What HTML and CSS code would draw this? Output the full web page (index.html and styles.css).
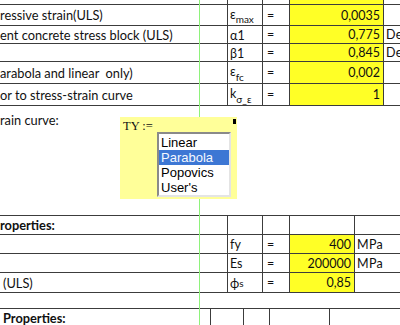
FILE: index.html
```html
<!DOCTYPE html>
<html>
<head>
<meta charset="utf-8">
<link rel="stylesheet" href="styles.css">
</head>
<body>
<div class="sheet">
  <div class="pagebreak"></div>

  <div class="row top r0">
    <div class="c lab"></div><div class="c sym"></div><div class="c eq"></div><div class="c val"></div><div class="c unit"></div>
  </div>
  <div class="row top r1">
    <div class="c lab">ressive strain(ULS)</div>
    <div class="c sym"><span class="sym-main">ε</span><sub>max</sub></div>
    <div class="c eq">=</div>
    <div class="c val">0,0035</div>
    <div class="c unit"></div>
  </div>
  <div class="row top r2">
    <div class="c lab">ent concrete stress block (ULS)</div>
    <div class="c sym">α1</div>
    <div class="c eq">=</div>
    <div class="c val">0,775</div>
    <div class="c unit">De</div>
  </div>
  <div class="row top r2">
    <div class="c lab"></div>
    <div class="c sym">β1</div>
    <div class="c eq">=</div>
    <div class="c val">0,845</div>
    <div class="c unit">De</div>
  </div>
  <div class="row top r4">
    <div class="c lab">arabola and linear&nbsp; only)</div>
    <div class="c sym"><span class="sym-main">ε</span><sub>fc</sub></div>
    <div class="c eq">=</div>
    <div class="c val">0,002</div>
    <div class="c unit"></div>
  </div>
  <div class="row top r4">
    <div class="c lab">or to stress-strain curve</div>
    <div class="c sym"><span class="sym-main">k</span><sub>σ_ε</sub></div>
    <div class="c eq">=</div>
    <div class="c val">1</div>
    <div class="c unit"></div>
  </div>

  <div class="chart">
    <div class="chart-label">rain curve:</div>
    <div class="region">
      <span class="marker"></span>
      <div class="ty">TY :=</div>
      <div class="listbox">
        <div class="item">Linear</div>
        <div class="item sel">Parabola</div>
        <div class="item">Popovics</div>
        <div class="item">User's</div>
      </div>
    </div>
  </div>

  <div class="row low h19">
    <div class="c lab bold">roperties:</div><div class="c sym"></div><div class="c eq"></div><div class="c val plain"></div><div class="c unit"></div>
  </div>
  <div class="row low h19">
    <div class="c lab"></div>
    <div class="c sym">fy</div>
    <div class="c eq">=</div>
    <div class="c val">400</div>
    <div class="c unit">MPa</div>
  </div>
  <div class="row low h19">
    <div class="c lab"></div>
    <div class="c sym">Es</div>
    <div class="c eq">=</div>
    <div class="c val">200000</div>
    <div class="c unit">MPa</div>
  </div>
  <div class="row low h20">
    <div class="c lab ind">(ULS)</div>
    <div class="c sym"><span class="sym-main">ϕ</span><sub class="s-small">s</sub></div>
    <div class="c eq">=</div>
    <div class="c val">0,85</div>
    <div class="c unit"></div>
  </div>
  <div class="row blank h16"></div>
  <div class="row last">
    <div class="c lab bold ind">Properties:</div><div class="c"></div><div class="c"></div><div class="c"></div><div class="c"></div>
  </div>
</div>
</body>
</html>
```

FILE: styles.css
```css
html, body {
  margin: 0;
  padding: 0;
  background: #ffffff;
}
body {
  width: 400px;
  height: 325px;
  overflow: hidden;
  font-family: "Lato", "Liberation Sans", sans-serif;
  font-size: 12.5px;
  color: #111;
}
.sheet {
  position: relative;
  width: 400px;
  height: 325px;
  overflow: hidden;
}
.pagebreak {
  position: absolute;
  left: 199px;
  top: 0;
  width: 1px;
  height: 325px;
  background: #8ef27a;
  z-index: 1;
}
.row {
  display: grid;
  box-sizing: border-box;
  border-bottom: 1px solid #3c3c3c;
  white-space: nowrap;
}
.row.top {
  grid-template-columns: 227px 35px 27px 94px 1fr;
}
.row.low {
  grid-template-columns: 227px 35px 27px 65px 1fr;
}
.row.last {
  grid-template-columns: 210px 33px 26px 60px 1fr;
  height: 16px;
  border-bottom: none;
}
.row.last .lab {
  align-items: flex-start;
  line-height: 14px;
  padding-top: 2px;
}
.r0 { height: 5px; }
.r1 { height: 21px; }
.r2 { height: 18px; }
.r4 { height: 22px; }
.h19 { height: 19px; }
.h20 { height: 20px; }
.h16 { height: 16px; }
.c {
  display: flex;
  align-items: center;
  overflow: hidden;
  padding: 0 2px;
  box-sizing: border-box;
}
.c + .c {
  border-left: 1px solid #3c3c3c;
}
.lab {
  padding: 0;
  font-size: 12.8px;
}
.lab.ind {
  padding-left: 3px;
}
.bold {
  font-weight: bold;
}
.val {
  background: #ffff26;
  justify-content: flex-end;
  padding-right: 3px;
}
.val.plain {
  background: transparent;
}
.eq {
  padding-left: 4px;
}
.unit {
  padding-left: 2px;
  letter-spacing: 0.3px;
}
.sym-main {
  align-self: flex-start;
  margin-top: 2px;
}
.sym sub {
  font-size: 10px;
  align-self: flex-end;
  margin-bottom: 0;
  vertical-align: baseline;
}
.sym .s-small {
  margin-bottom: 3px;
}
.r2 .sym, .low .sym {
  padding-top: 1px;
}
.chart {
  display: flex;
  align-items: flex-start;
  height: 110px;
  box-sizing: border-box;
  border-bottom: 1px solid #3c3c3c;
}
.chart-label {
  width: 120px;
  padding-top: 6px;
  font-size: 12.8px;
}
.region {
  position: relative;
  z-index: 2;
  margin-top: 11px;
  width: 117px;
  height: 82px;
  background: #ffff99;
  box-sizing: border-box;
  padding: 3px 0 0 3px;
}
.marker {
  position: absolute;
  right: 1px;
  top: 2px;
  width: 3px;
  height: 5px;
  background: #000;
}
.ty {
  font-family: "Liberation Serif", serif;
  font-size: 12.5px;
  line-height: 12px;
}
.listbox {
  margin: 0 0 0 34px;
  width: 74px;
  height: 65px;
  box-sizing: border-box;
  background: #fff;
  border-top: 2px solid #8a8a8a;
  border-left: 2px solid #8a8a8a;
  border-right: 2px solid #e4e4e4;
  border-bottom: 2px solid #e4e4e4;
  padding-top: 1px;
  font-family: "Liberation Sans", Arial, sans-serif;
  font-size: 13px;
}
.item {
  height: 15px;
  line-height: 15px;
  padding-left: 2px;
  color: #000;
}
.item.sel {
  background: #3d77d4;
  color: #f4f8ff;
}
```
